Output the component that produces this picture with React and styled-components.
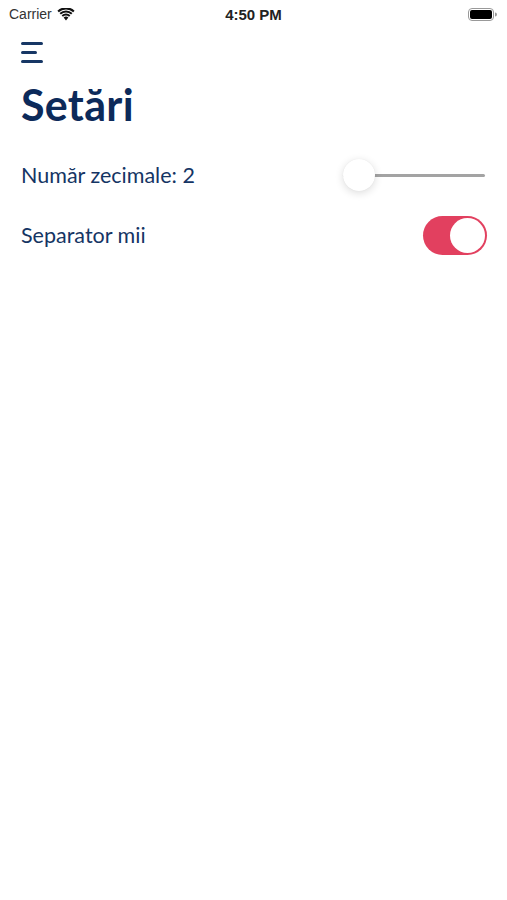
import React, { useState } from "react";
import styled, { createGlobalStyle } from "styled-components";

const GlobalStyle = createGlobalStyle`
  body {
    margin: 0;
    background: #fff;
    font-family: Lato, "Open Sans", sans-serif;
  }
`;

const Screen = styled.div`
  width: 507px;
  height: 900px;
  background: #fff;
  display: flex;
  flex-direction: column;
`;

const StatusBar = styled.div`
  height: 28px;
  padding: 0 9px;
  display: grid;
  grid-template-columns: 1fr auto 1fr;
  align-items: center;
  font-family: "Liberation Sans", Arial, sans-serif;
  color: #222;
`;

const Carrier = styled.div`
  display: flex;
  align-items: center;
  gap: 5px;
  font-size: 14px;
  color: #333;
`;

const Clock = styled.div`
  font-size: 15px;
  font-weight: 700;
  color: #222;
`;

const Battery = styled.div`
  justify-self: end;
  display: flex;
  align-items: center;
  margin-right: 1px;
`;

const Content = styled.div`
  padding: 0 21px;
  display: flex;
  flex-direction: column;
`;

const MenuButton = styled.button`
  width: 24px;
  height: 24px;
  margin-top: 12px;
  padding: 0;
  border: none;
  background: none;
  display: flex;
  flex-direction: column;
  justify-content: center;
  gap: 6px;
`;

const MenuLine = styled.span`
  display: block;
  height: 3px;
  border-radius: 2px;
  background: #173765;
  width: ${(p) => (p.$short ? "16px" : "22px")};
`;

const Title = styled.h1`
  margin: 15px 0 0;
  font-size: 43px;
  font-weight: 700;
  line-height: 52px;
  color: #0c2a5a;
  letter-spacing: 0.3px;
`;

const Row = styled.div`
  display: flex;
  align-items: center;
  justify-content: space-between;
  height: ${(p) => p.$h}px;
`;

const Label = styled.span`
  font-size: 21.5px;
  color: #153564;
`;

const Slider = styled.div`
  position: relative;
  width: 142px;
  height: 34px;
  display: flex;
  align-items: center;
  margin-right: 1px;
`;

const Track = styled.div`
  flex: 1;
  height: 3px;
  border-radius: 2px;
  background: #a3a3a3;
`;

const Thumb = styled.div`
  position: absolute;
  left: 0;
  top: 1px;
  width: 32px;
  height: 32px;
  border-radius: 50%;
  background: #fff;
  box-shadow: 0 2px 8px rgba(0, 0, 0, 0.14), 0 0 1px rgba(0, 0, 0, 0.08);
`;

const Switch = styled.button`
  width: 64px;
  height: 39px;
  border: none;
  padding: 2px;
  border-radius: 20px;
  background: #e2405f;
  display: flex;
  justify-content: ${(p) => (p.$on ? "flex-end" : "flex-start")};
  align-items: center;
  margin-right: -1px;
`;

const Knob = styled.span`
  width: 35px;
  height: 35px;
  border-radius: 50%;
  background: #fff;
  box-sizing: border-box;
`;

const App = () => {
  const [on, setOn] = useState(true);

  return (
    <Screen>
      <GlobalStyle />
      <StatusBar>
        <Carrier>
          Carrier
          <svg width="18" height="13" viewBox="0 0 18 13">
            <path d="M9 12.5 L6.6 9.6 A3.6 3.6 0 0 1 11.4 9.6 Z" fill="#111" />
            <path d="M4.6 7.3 A6.6 6.6 0 0 1 13.4 7.3 L12.1 8.8 A4.6 4.6 0 0 0 5.9 8.8 Z" fill="#111" />
            <path d="M2.5 5 A9.6 9.6 0 0 1 15.5 5 L14.1 6.5 A7.6 7.6 0 0 0 3.9 6.5 Z" fill="#111" />
            <path d="M0.4 2.7 A12.6 12.6 0 0 1 17.6 2.7 L16.2 4.2 A10.6 10.6 0 0 0 1.8 4.2 Z" fill="#111" />
          </svg>
        </Carrier>
        <Clock>4:50 PM</Clock>
        <Battery>
          <svg width="29" height="13" viewBox="0 0 29 13">
            <rect x="0.5" y="0.5" width="25" height="12" rx="3.5" fill="none" stroke="#999" />
            <rect x="2" y="2" width="22" height="9" rx="2" fill="#000" />
            <path d="M27 4.5 a1.5 1.5 0 0 1 0 4 Z" fill="#999" />
          </svg>
        </Battery>
      </StatusBar>
      <Content>
        <MenuButton aria-label="menu">
          <MenuLine />
          <MenuLine $short />
          <MenuLine />
        </MenuButton>
        <Title>Setări</Title>
        <Row $h={62} style={{ marginTop: 13 }}>
          <Label>Număr zecimale: 2</Label>
          <Slider>
            <Track />
            <Thumb />
          </Slider>
        </Row>
        <Row $h={58}>
          <Label>Separator mii</Label>
          <Switch $on={on} onClick={() => setOn(!on)}>
            <Knob />
          </Switch>
        </Row>
      </Content>
    </Screen>
  );
};

export default App;
